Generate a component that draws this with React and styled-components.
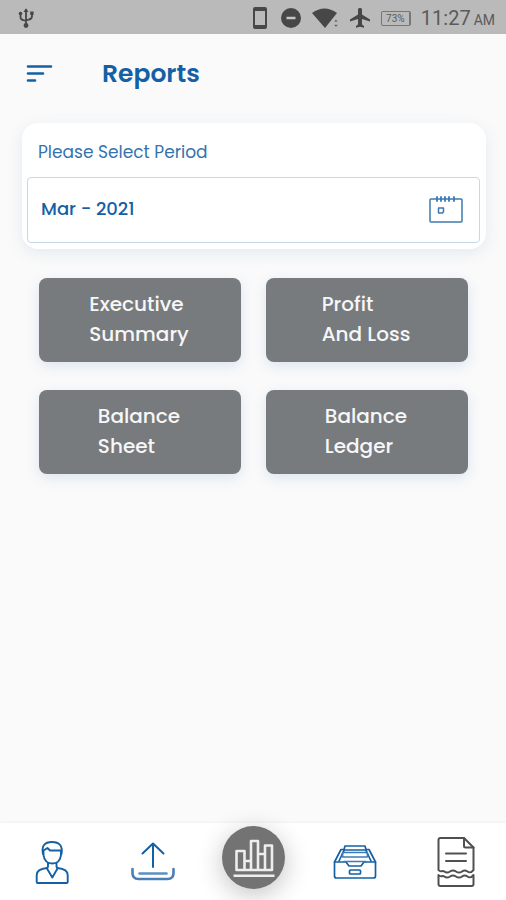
import React from "react";
import styled, { createGlobalStyle } from "styled-components";

const BLUE = "#1560a4";
const GREY = "#787b7d";

const GlobalStyle = createGlobalStyle`
  *, *::before, *::after { box-sizing: border-box; }
  body { margin: 0; background: #fafafa; font-family: Poppins, Inter, "Open Sans", sans-serif; }
  button, input { font: inherit; }
`;

const Screen = styled.div`
  min-height: 100vh;
  display: flex;
  flex-direction: column;
  color: ${BLUE};
`;

const StatusBar = styled.div`
  height: 34px;
  padding: 2px 11px 0 16px;
  display: flex;
  align-items: center;
  justify-content: space-between;
  background: #bababa;
  color: #474747;
  font-family: Roboto, sans-serif;
`;

const StatusGroup = styled.div`
  display: flex;
  align-items: center;
  gap: 10px;
`;

const Clock = styled.time`
  display: flex;
  align-items: baseline;
  gap: 3px;
  padding-top: 2px;
  color: #5a5a5a;
  font-size: 20px;
  line-height: 24px;
`;

const Meridiem = styled.span`
  font-size: 14px;
`;

const Header = styled.header`
  display: flex;
  align-items: center;
  gap: 48px;
  height: 80px;
  padding: 0 26px;
`;

const IconButton = styled.button`
  display: flex;
  align-items: center;
  justify-content: center;
  padding: 0;
  border: 0;
  background: none;
  color: ${BLUE};
  cursor: pointer;
`;

const Title = styled.h1`
  margin: 0;
  font-size: 25px;
  line-height: 36px;
  font-weight: 600;
`;

const Main = styled.main`
  flex: 1;
  padding: 9px 20px 24px 22px;
`;

const PeriodCard = styled.section`
  padding: 16px 6px 6px 5px;
  border-radius: 16px;
  background: #fff;
  box-shadow: 0 4px 16px rgba(40, 90, 150, 0.1);
`;

const PeriodLabel = styled.label`
  display: block;
  padding: 0 11px 12px;
  font-size: 17px;
  line-height: 26px;
  color: #3474ae;
`;

const PeriodField = styled.div`
  display: flex;
  align-items: center;
  height: 66px;
  padding: 0 16px 0 13px;
  border: 1px solid #c5d9ea;
  border-radius: 4px;
`;

const PeriodInput = styled.input`
  flex: 1;
  min-width: 0;
  padding: 0 0 2px;
  border: 0;
  outline: 0;
  background: none;
  color: ${BLUE};
  font-size: 18px;
  line-height: 28px;
  font-weight: 500;
`;

const TileGrid = styled.div`
  display: grid;
  grid-template-columns: 1fr 1fr;
  gap: 28px 25px;
  padding: 29px 18px 0 17px;
`;

const Tile = styled.button`
  display: flex;
  align-items: center;
  justify-content: center;
  min-height: 84px;
  padding: 0 14px 2px 12px;
  border: 0;
  border-radius: 8px;
  background: ${GREY};
  box-shadow: 0 4px 14px rgba(60, 120, 190, 0.16);
  color: #f6f7f8;
  font-size: 20px;
  line-height: 30px;
  font-weight: 500;
  text-align: left;
  white-space: pre-line;
  cursor: pointer;
`;

const BottomNav = styled.nav`
  position: sticky;
  bottom: 0;
  display: grid;
  grid-template-columns: repeat(5, 1fr);
  height: 77px;
  padding-left: 2px;
  background: #fff;
  box-shadow: 0 -1px 3px rgba(0, 0, 0, 0.04);
`;

const NavItem = styled.a`
  display: flex;
  align-items: center;
  justify-content: center;
  height: ${(p) => (p.$active ? "68px" : "77px")};
  color: ${(p) => (p.$dark ? "#505050" : BLUE)};
`;

const ActiveDisc = styled.span`
  display: flex;
  align-items: center;
  justify-content: center;
  width: 63px;
  height: 63px;
  border-radius: 50%;
  background: #737373;
  color: #eee;
  box-shadow: 0 6px 26px rgba(0, 0, 0, 0.24);
`;

const Glyph = styled.svg`
  display: block;
  fill: none;
  stroke: currentColor;
  stroke-width: ${(p) => p.$weight || 2};
  stroke-linecap: round;
  stroke-linejoin: round;
`;

const UsbIcon = () => (
  <Glyph width="20" height="22" viewBox="0 0 20 22" $weight={1.8} aria-label="USB">
    <path d="M10 3v15M4.500 7v3q0 2.500 2.500 3l3 1M16 7v2q0 3-3 3.500l-3 1" />
    <path d="M7.500 5 10 1.200 12.500 5z" fill="currentColor" strokeWidth="0" />
    <circle cx="10" cy="18.500" r="2.400" fill="currentColor" strokeWidth="0" />
    <circle cx="4.500" cy="6.500" r="1.800" fill="currentColor" strokeWidth="0" />
    <path d="M14.200 4.500h3.400v3.400h-3.400z" fill="currentColor" strokeWidth="0" />
  </Glyph>
);

const PhoneIcon = () => (
  <Glyph width="20" height="22" viewBox="-2 0 20 22" aria-label="Phone">
    <path d="M3 0h10q2 0 2 2v18q0 2-2 2H3q-2 0-2-2V2q0-2 2-2zM3 4v14h10V4z" fill="currentColor" fillRule="evenodd" strokeWidth="0" />
  </Glyph>
);

const DndIcon = () => (
  <Glyph width="22" height="22" viewBox="0 0 22 22" aria-label="Do not disturb">
    <circle cx="11" cy="11" r="10" fill="currentColor" strokeWidth="0" />
    <path d="M6.500 11h9" stroke="#c6c6c6" strokeWidth="2.500" strokeLinecap="butt" />
  </Glyph>
);

const WifiIcon = () => (
  <Glyph width="27" height="22" viewBox="0 0 27 22" aria-label="Wi-Fi">
    <path d="M0 6q12.500-9 25 0L13 21z" fill="currentColor" strokeWidth="0" />
    <path d="m24 12.500 1.800 2.200h-3.600zM24 20l1.800-2.200h-3.600z" fill="currentColor" stroke="#bababa" strokeWidth="0.500" />
  </Glyph>
);

const PlaneIcon = () => (
  <Glyph width="22" height="22" viewBox="0 0 22 22" aria-label="Airplane mode">
    <path d="M21 14.500v-2L13 7.500V2.400Q13 1 11 1T9 2.400v5.100l-8 5v2L9 12v5.500L7 19v1.800l4-1.100 4 1.100V19l-2-1.500V12z" fill="currentColor" strokeWidth="0" />
  </Glyph>
);

const Battery = styled.span`
  width: 30px;
  height: 15px;
  border: 1px solid #777;
  border-right-width: 2px;
  border-radius: 2px;
  color: #5c5c5c;
  font-size: 10px;
  line-height: 13px;
  text-align: center;
`;

const MenuIcon = () => (
  <Glyph width="28" height="20" viewBox="0 0 28 20" $weight={2.6}>
    <path d="M2 2.500h23M2 9.500h15M2 16.500h7" />
  </Glyph>
);

const CalendarIcon = () => (
  <Glyph width="34" height="28" viewBox="0 0 34 28" $weight={1.5}>
    <path d="M7 3H2Q1 3 1 4v21q0 1 1 1h30q1 0 1-1V4q0-1-1-1h-5M7 3h20" stroke="#3c79b0" />
    <path d="M8 1v4M12 1v4M16 1v4M20 1v4M25 1v4" stroke="#3c79b0" strokeWidth="1.800" />
    <path d="M9.500 12h5v3.500l-1 1.500h-4z" stroke="#3c79b0" />
  </Glyph>
);

const PersonIcon = () => (
  <Glyph width="34" height="44" viewBox="0 0 34 44" $weight={1.9}>
    <path d="M8 14Q5.500 2 17 2T26.500 14" />
    <path d="M8.500 10.500 12.500 8l2.500 2.500H26V15q-1 8.500-8.700 8.500T8.500 15z" />
    <path d="M13 23v3.500l-1 2 5.300 9 5.200-9-1-2V23" />
    <path d="M12 28Q1.700 29 1.700 35v7q0 1 1 1h29q1 0 1-1v-7q0-6-10.200-7" />
  </Glyph>
);

const UploadIcon = () => (
  <Glyph width="44" height="40" viewBox="0 0 44 40" $weight={2}>
    <path d="M22 25V1.500M11.500 11.500 22 1.500l10.500 10" />
    <path d="M1.500 27v4q0 6 6 6h29q6 0 6-6v-4" stroke="#497fb4" strokeWidth="2.600" />
    <path d="M8.500 31.500h27" stroke="#5f8fbd" strokeWidth="2.600" />
  </Glyph>
);

const ChartIcon = () => (
  <Glyph width="44" height="40" viewBox="0 0 44 40" $weight={2.6}>
    <path d="M4.500 33V14h8v19M19 33V4h7v29M33 33V8.500h7V33M12.500 24H19M26 17h7M4.500 33H40" />
    <path d="M1.500 39h41" strokeWidth="3" strokeLinecap="butt" />
  </Glyph>
);

const DrawerIcon = () => (
  <Glyph width="44" height="36" viewBox="0 0 44 36" $weight={1.7}>
    <path d="M1.500 18H13l3 4h12l3-4h11.500v14q0 2-2 2h-37q-2 0-2-2z" />
    <path d="M1.500 18 8 5.500h3M42.500 18 36 5.500h-3M6 17l4.500-9.500M38 17l-4.500-9.500" />
    <path d="M10.500 7.500 12 2h20l1.500 5.500M12 6h20" />
    <path d="M9.500 12.500v-3q0-1 1-1h23q1 0 1 1v3M10 13h24M11 17.500h22" stroke="#3d7bb4" />
    <path d="M17.500 26h9q1 0 1 1v2q0 1-1 1h-9q-1 0-1-1v-2q0-1 1-1z" />
  </Glyph>
);

const TornPageIcon = () => (
  <Glyph width="38" height="50" viewBox="0 0 38 50" $weight={2}>
    <path d="M1.500 33V3q0-2 2-2H28l8.500 9V33Q34 36.500 31 33.800T25.500 33.800 19.500 33.800 13.500 33.800 7.500 34.500 1.500 33z" strokeWidth="0" />
    <path d="M1.500 33V3q0-2 2-2H27l9.500 9.500V33c-2.500 3-4 3-6 1.500s-3.500-1.500-5.500 0-3.800 1.500-6 0-3.800-1.500-6 0-3.800 1.500-5.700 0-3.500 1.500-5.800-1.500z" />
    <path d="M27 1v8q0 1.500 1.500 1.500h8M9 16.500h20M9 24h20" />
    <path d="M1.500 38v9q0 2 2 2h31q2 0 2-2v-9c-2.500 3-4 3-6 1.500s-3.500-1.500-5.500 0-3.800 1.500-6 0-3.800-1.500-6 0-3.800 1.500-5.700 0-3.500 1.500-5.800-1.500z" />
  </Glyph>
);

const reports = [
  "Executive\nSummary",
  "Profit\nAnd Loss",
  "Balance\nSheet",
  "Balance\nLedger",
];

export default function App() {
  return (
    <Screen>
      <GlobalStyle />
      <StatusBar>
        <UsbIcon />
        <StatusGroup>
          <PhoneIcon />
          <DndIcon />
          <WifiIcon />
          <PlaneIcon />
          <Battery>73%</Battery>
          <Clock>
            11:27<Meridiem>AM</Meridiem>
          </Clock>
        </StatusGroup>
      </StatusBar>
      <Header>
        <IconButton type="button" aria-label="Menu">
          <MenuIcon />
        </IconButton>
        <Title>Reports</Title>
      </Header>
      <Main>
        <PeriodCard>
          <PeriodLabel htmlFor="period">Please Select Period</PeriodLabel>
          <PeriodField>
            <PeriodInput id="period" type="text" defaultValue="Mar - 2021" />
            <IconButton type="button" aria-label="Open calendar">
              <CalendarIcon />
            </IconButton>
          </PeriodField>
        </PeriodCard>
        <TileGrid>
          {reports.map((name) => (
            <Tile key={name} type="button">
              {name}
            </Tile>
          ))}
        </TileGrid>
      </Main>
      <BottomNav aria-label="Main">
        <NavItem href="#profile" aria-label="Profile">
          <PersonIcon />
        </NavItem>
        <NavItem href="#upload" aria-label="Upload">
          <UploadIcon />
        </NavItem>
        <NavItem href="#reports" aria-label="Reports" aria-current="page" $active>
          <ActiveDisc>
            <ChartIcon />
          </ActiveDisc>
        </NavItem>
        <NavItem href="#documents" aria-label="Documents">
          <DrawerIcon />
        </NavItem>
        <NavItem href="#receipts" aria-label="Receipts" $dark>
          <TornPageIcon />
        </NavItem>
      </BottomNav>
    </Screen>
  );
}
